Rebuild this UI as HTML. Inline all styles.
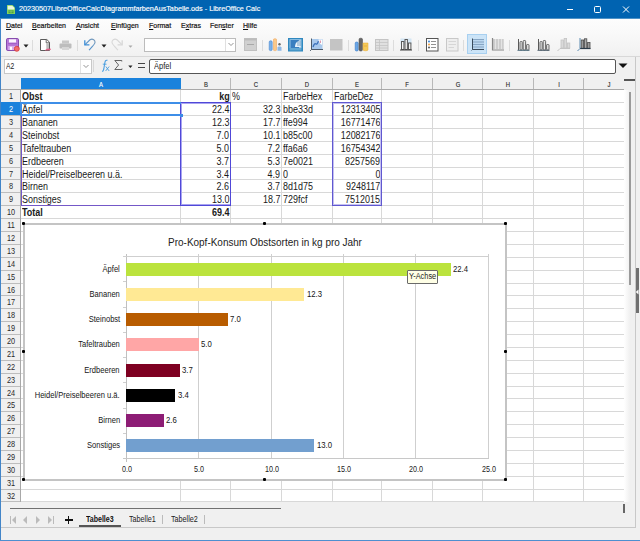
<!DOCTYPE html>
<html><head><meta charset="utf-8"><style>
html,body{margin:0;padding:0;}
body{width:640px;height:541px;position:relative;overflow:hidden;background:#f0f0f0;font-family:"Liberation Sans", sans-serif;}
body>div{position:absolute;}
.t{white-space:nowrap;line-height:1.15;}
u{text-decoration-thickness:0.7px;text-underline-offset:0.6px;}
</style></head><body>
<div style="left:0px;top:0px;width:640px;height:18px;background:#0063b1"></div><svg style="position:absolute;left:7px;top:5px" width="8" height="9" viewBox="0 0 8 9"><path d="M0 0H5.5L8 2.5V9H0Z" fill="#86d45c"/><path d="M0.7 0.7H5.2L7.3 2.8V4.5H0.7Z" fill="#eaf8e0"/><path d="M1.5 5.5H6.5V8.2H1.5Z" fill="#3e9c34"/><path d="M1.5 6.8H6.5M4 5.5V8.2" stroke="#9ed880" stroke-width="0.6"/></svg><div class="t" style="left:19px;top:5.3px;font-size:7.4px;color:#fff;font-weight:400;transform:scaleX(0.975);transform-origin:left top;-webkit-text-stroke:0.15px #fff;">20230507LibreOfficeCalcDiagrammfarbenAusTabelle.ods - LibreOffice Calc</div><svg style="position:absolute;left:560px;top:0px" width="80" height="18" viewBox="0 0 80 18"><path d="M7 9.5H13" stroke="#fff" stroke-width="1"/><rect x="34.5" y="6.5" width="6" height="6" rx="1" fill="none" stroke="#fff" stroke-width="1"/><path d="M63 6.5L69 12.5M69 6.5L63 12.5" stroke="#fff" stroke-width="1"/></svg><div style="left:0px;top:18px;width:640px;height:38px;background:linear-gradient(#fdfdfd,#f9f9f9 40%,#f1f1f1)"></div><div style="left:0px;top:18px;width:640px;height:1px;background:#4d92c8"></div><div class="t" style="left:5.7px;top:21.9px;font-size:7.8px;color:#111;font-weight:400;transform:scaleX(0.9);transform-origin:left top;-webkit-text-stroke:0.2px #111;"><u>D</u>atei</div><div class="t" style="left:32.1px;top:21.9px;font-size:7.8px;color:#111;font-weight:400;transform:scaleX(0.9);transform-origin:left top;-webkit-text-stroke:0.2px #111;"><u>B</u>earbeiten</div><div class="t" style="left:76.2px;top:21.9px;font-size:7.8px;color:#111;font-weight:400;transform:scaleX(0.9);transform-origin:left top;-webkit-text-stroke:0.2px #111;"><u>A</u>nsicht</div><div class="t" style="left:110.6px;top:21.9px;font-size:7.8px;color:#111;font-weight:400;transform:scaleX(0.9);transform-origin:left top;-webkit-text-stroke:0.2px #111;"><u>E</u>infügen</div><div class="t" style="left:149.1px;top:21.9px;font-size:7.8px;color:#111;font-weight:400;transform:scaleX(0.9);transform-origin:left top;-webkit-text-stroke:0.2px #111;"><u>F</u>ormat</div><div class="t" style="left:181px;top:21.9px;font-size:7.8px;color:#111;font-weight:400;transform:scaleX(0.9);transform-origin:left top;-webkit-text-stroke:0.2px #111;">E<u>x</u>tras</div><div class="t" style="left:210.2px;top:21.9px;font-size:7.8px;color:#111;font-weight:400;transform:scaleX(0.9);transform-origin:left top;-webkit-text-stroke:0.2px #111;">Fen<u>s</u>ter</div><div class="t" style="left:243.4px;top:21.9px;font-size:7.8px;color:#111;font-weight:400;transform:scaleX(0.9);transform-origin:left top;-webkit-text-stroke:0.2px #111;"><u>H</u>ilfe</div><div style="left:1px;top:56px;width:639px;height:1px;background:#d8d8d8"></div><div style="left:32px;top:40px;width:1px;height:11px;background:#dcdcdc"></div><div style="left:77px;top:40px;width:1px;height:11px;background:#dcdcdc"></div><div style="left:262px;top:40px;width:1px;height:11px;background:#dcdcdc"></div><div style="left:348px;top:40px;width:1px;height:11px;background:#dcdcdc"></div><div style="left:393px;top:40px;width:1px;height:11px;background:#dcdcdc"></div><div style="left:418px;top:40px;width:1px;height:11px;background:#dcdcdc"></div><div style="left:463px;top:40px;width:1px;height:11px;background:#dcdcdc"></div><div style="left:509px;top:40px;width:1px;height:11px;background:#dcdcdc"></div><svg style="position:absolute;left:6px;top:38px" width="14" height="14" viewBox="0 0 14 14"><rect x="0.5" y="0.5" width="12" height="12" rx="1.2" fill="#b878d8" stroke="#7d3fa6" stroke-width="0.9"/><rect x="3" y="1.3" width="7" height="3.2" fill="#fbf4fe"/><rect x="2" y="5.3" width="9" height="0.8" fill="#9a58c0"/><rect x="2.2" y="8" width="8.6" height="4" fill="#d9acee"/><rect x="4" y="8.8" width="2" height="3" fill="#fff"/><circle cx="10.8" cy="10.8" r="2.5" fill="#f26b6b" stroke="#d83a3a" stroke-width="0.8"/></svg><svg style="position:absolute;left:23px;top:44px" width="6" height="4" viewBox="0 0 6 4"><path d="M0.5 0.5H5.5L3 3.5Z" fill="#222"/></svg><svg style="position:absolute;left:39px;top:38px" width="13" height="14" viewBox="0 0 13 14"><path d="M1.5 1.5H7.8L10.5 4.2V12.5H1.5Z" fill="#fff" stroke="#5a5a5a" stroke-width="1"/><path d="M7.2 2V4.8H10" fill="none" stroke="#5a5a5a" stroke-width="0.9"/><rect x="7.3" y="5.2" width="2.7" height="6.8" fill="#bdbdbd"/><path d="M6.5 12.2C7.5 11 9.5 10.6 11.8 11.2C10.5 12 9 12.3 7.5 12Z" fill="#e8608a" stroke="#e8608a" stroke-width="0.7"/></svg><svg style="position:absolute;left:59px;top:40px" width="14" height="11" viewBox="0 0 14 11"><rect x="3" y="0.5" width="7" height="3" fill="#c8c8c8"/><rect x="0.5" y="3.5" width="12" height="5" rx="1" fill="#bdbdbd"/><rect x="3" y="7" width="7" height="3" fill="#d6d6d6"/></svg><svg style="position:absolute;left:83px;top:38px" width="14" height="14" viewBox="0 0 14 14"><defs><linearGradient id="ug" x1="0" y1="1" x2="1" y2="0"><stop offset="0" stop-color="#3f8fd8"/><stop offset="1" stop-color="#7a9ab8"/></linearGradient></defs><path d="M1.8 6.8L7 1.8C9.5 0.2 12.8 2 11.8 5.2C11.3 6.8 8 10 6 12.2" fill="none" stroke="url(#ug)" stroke-width="1.1"/><path d="M1.8 2.2V6.8H6.4" fill="none" stroke="#3f8fd8" stroke-width="1.3"/></svg><svg style="position:absolute;left:101px;top:44px" width="6" height="4" viewBox="0 0 6 4"><path d="M0.5 0.5H5.5L3 3.5Z" fill="#222"/></svg><svg style="position:absolute;left:110px;top:38px" width="14" height="14" viewBox="0 0 14 14"><path d="M12.2 6.8L7 1.8C4.5 0.2 1.2 2 2.2 5.2C2.7 6.8 6 10 8 12.2" fill="none" stroke="#d8d8d8" stroke-width="1.1"/><path d="M12.2 2.2V6.8H7.6" fill="none" stroke="#d8d8d8" stroke-width="1.3"/></svg><svg style="position:absolute;left:128px;top:45px" width="5" height="3" viewBox="0 0 5 3"><path d="M0.5 0.5H4.5L2.5 2.8Z" fill="#aaa"/></svg><div style="left:144px;top:38px;width:92px;height:14px;background:#fff;border:1px solid #bcbcbc;box-sizing:border-box"></div><div style="left:225px;top:39px;width:1px;height:12px;background:#e0e0e0"></div><svg style="position:absolute;left:227px;top:40px" width="8" height="9" viewBox="0 0 8 9"><path d="M1.5 3L4 5.5L6.5 3" fill="none" stroke="#888" stroke-width="0.9"/></svg><svg style="position:absolute;left:244px;top:38px" width="13" height="13" viewBox="0 0 13 13"><rect x="0.5" y="0.5" width="12" height="12" fill="#d0d0d0" stroke="#c0c0c0"/><rect x="0.5" y="0.5" width="12" height="2" fill="#bcbcbc"/><rect x="3" y="6" width="7" height="1" fill="#a8a8a8"/></svg><svg style="position:absolute;left:268px;top:37px" width="16" height="15" viewBox="0 0 16 15"><rect x="1.2" y="3.8" width="3" height="9.8" rx="1.3" fill="#78b0ea" stroke="#4a88d0" stroke-width="0.6"/><rect x="5.5" y="1.8" width="3" height="11.8" rx="0.8" fill="#f9c98a" stroke="#f0a860" stroke-width="0.6"/><circle cx="11.5" cy="7.3" r="1.2" fill="#666"/><path d="M9.5 13.8V10.5C9.5 9 13.5 9 13.5 10.5V13.8Z" fill="#8cb8e6"/></svg><svg style="position:absolute;left:288px;top:38px" width="16" height="14" viewBox="0 0 16 14"><rect x="0" y="0" width="15" height="13.5" fill="#2f88bf"/><rect x="1.5" y="1.2" width="12" height="9.3" fill="#9cc8e8"/><rect x="2.5" y="2" width="8.5" height="8" fill="#3a7fc0"/><path d="M7 9C7 5 9 3 12.5 2.2V9Z" fill="#e8f2fa"/><path d="M10 2.5V8M12 2.5V8" stroke="#2f6ea8" stroke-width="0.6"/><path d="M1.5 11.8H13.5" stroke="#8cc0e0" stroke-width="0.8"/></svg><svg style="position:absolute;left:310px;top:38px" width="14" height="14" viewBox="0 0 14 14"><rect x="2" y="1" width="10.5" height="10" fill="#a9c9ec"/><path d="M3 9C4 6 5 5 6 6S8 4 8.5 3" fill="none" stroke="#3a6fb8" stroke-width="1.3"/><path d="M8.5 1.5H12V6.5C11 7 10.5 6 10 5.5L9 4Z" fill="#fff"/><path d="M10.3 2.5V5" stroke="#c04a6a" stroke-width="0.7"/><path d="M1.5 0.5V11.5H13" fill="none" stroke="#3a4a5a" stroke-width="0.9"/><path d="M1.5 11.5L0 13" stroke="#3a4a5a" stroke-width="0.8"/></svg><svg style="position:absolute;left:330px;top:39px" width="13" height="12" viewBox="0 0 13 12"><rect x="0" y="0" width="12.5" height="11.5" fill="#c4c4c4"/></svg><svg style="position:absolute;left:354px;top:37px" width="15" height="15" viewBox="0 0 15 15"><rect x="1.2" y="5" width="3" height="9" rx="1.3" fill="#6aa6e6" stroke="#3a7cc8" stroke-width="0.6"/><rect x="5" y="1.2" width="3.5" height="12.8" rx="1.4" fill="#666" stroke="#444" stroke-width="0.5"/><path d="M9 6H14V13C14 14 9 14 9 13Z" fill="#f6cb5a" stroke="#e8a830" stroke-width="0.5"/><path d="M10 9H13" stroke="#e0a030" stroke-width="0.6"/></svg><svg style="position:absolute;left:375px;top:39px" width="14" height="12" viewBox="0 0 14 12"><rect x="0.5" y="0.5" width="12.5" height="11" fill="#e0e0e0" stroke="#c4c4c4"/><path d="M0.5 3.5H13M0.5 6.5H13M0.5 9H13M4.5 0.5V11.5" stroke="#c4c4c4" stroke-width="0.8"/></svg><svg style="position:absolute;left:400px;top:38px" width="13" height="13" viewBox="0 0 13 13"><rect x="0.5" y="0.5" width="11" height="6" fill="#d4e6f4"/><rect x="1.5" y="3.5" width="2.4" height="8" fill="#f4f4f4" stroke="#5a5a5a" stroke-width="1"/><rect x="5" y="1.5" width="2.4" height="10" fill="#f4f4f4" stroke="#5a5a5a" stroke-width="1"/><rect x="8.5" y="5" width="2.4" height="6.5" fill="#f4f4f4" stroke="#5a5a5a" stroke-width="1"/><path d="M0 12H12" stroke="#444" stroke-width="1"/></svg><svg style="position:absolute;left:426px;top:38px" width="13" height="14" viewBox="0 0 13 14"><rect x="0.5" y="0.5" width="11.5" height="12.5" fill="#fff" stroke="#555" stroke-width="1"/><circle cx="3" cy="3.5" r="1" fill="#3a86d8"/><circle cx="3" cy="6.5" r="1" fill="#f0a040"/><circle cx="3" cy="9.5" r="1" fill="#555"/><path d="M5 3.5H10M5 6.5H10M5 9.5H10" stroke="#777" stroke-width="0.8"/></svg><svg style="position:absolute;left:446px;top:38px" width="13" height="14" viewBox="0 0 13 14"><rect x="0.5" y="0.5" width="11.5" height="12.5" fill="#eee" stroke="#c8c8c8" stroke-width="1"/><path d="M2.5 3.5H10M2.5 6.5H10M2.5 9.5H8" stroke="#cfcfcf" stroke-width="0.8"/></svg><div style="left:467px;top:34px;width:20px;height:20px;background:#cce4f7;border:1px solid #a8d0f0;box-sizing:border-box"></div><svg style="position:absolute;left:471px;top:38px" width="14" height="13" viewBox="0 0 14 13"><rect x="1.5" y="1" width="11.5" height="10" fill="#bcd8f0"/><path d="M2 1.5H13M2 4H13M2 6.5H13M2 9H13" stroke="#7090b0" stroke-width="0.7"/><path d="M1.5 0.5V11.5H13" fill="none" stroke="#2a3a4a" stroke-width="0.9"/><path d="M1.5 11.5L0.5 12.5" stroke="#2a3a4a" stroke-width="0.7"/></svg><svg style="position:absolute;left:491px;top:38px" width="13" height="13" viewBox="0 0 13 13"><rect x="1" y="1" width="11" height="10" fill="#e4e4e4"/><path d="M3 1V11M6 1V11M9 1V11M12 1V11" stroke="#aaa" stroke-width="0.8"/><path d="M1.5 0V12H13" fill="none" stroke="#888" stroke-width="1.2"/></svg><svg style="position:absolute;left:517px;top:38px" width="14" height="14" viewBox="0 0 14 14"><path d="M1.5 1V12" stroke="#5a5a5a" stroke-width="1"/><rect x="3" y="3.5" width="2.2" height="8.5" rx="0.8" fill="#e8e8e8" stroke="#5a5a5a" stroke-width="0.9"/><rect x="6.2" y="2.5" width="2.4" height="9.5" rx="0.8" fill="#e8e8e8" stroke="#5a5a5a" stroke-width="0.9"/><rect x="9.6" y="6.5" width="2.4" height="5.5" rx="0.6" fill="#e8e8e8" stroke="#5a5a5a" stroke-width="0.9"/><path d="M0.5 12.3H12.5" stroke="#4a6878" stroke-width="1"/></svg><svg style="position:absolute;left:537px;top:38px" width="14" height="14" viewBox="0 0 14 14"><path d="M1.5 1V12" stroke="#5a5a5a" stroke-width="1"/><rect x="3" y="3.5" width="2.2" height="8.5" rx="0.8" fill="#e8e8e8" stroke="#5a5a5a" stroke-width="0.9"/><rect x="6.2" y="2.5" width="2.4" height="9.5" rx="0.8" fill="#e8e8e8" stroke="#5a5a5a" stroke-width="0.9"/><rect x="9.6" y="6.5" width="2.4" height="5.5" rx="0.6" fill="#e8e8e8" stroke="#5a5a5a" stroke-width="0.9"/><path d="M0.5 12.3H12.5" stroke="#4a5a68" stroke-width="1"/></svg><svg style="position:absolute;left:557px;top:37px" width="14" height="15" viewBox="0 0 14 15"><rect x="4" y="3" width="2.4" height="8" fill="#dadada" stroke="#c4c4c4" stroke-width="0.8"/><rect x="7.2" y="1.5" width="2.4" height="9.5" fill="#dadada" stroke="#c4c4c4" stroke-width="0.8"/><rect x="10.4" y="6" width="2.4" height="5" fill="#dadada" stroke="#c4c4c4" stroke-width="0.8"/><path d="M3 11.5H13M3 11.5L0.5 14" stroke="#c4c4c4" stroke-width="1"/></svg><svg style="position:absolute;left:577px;top:37px" width="14" height="15" viewBox="0 0 14 15"><path d="M3 1V11.5" stroke="#5a8ab0" stroke-width="1"/><rect x="4.2" y="3" width="2.4" height="8.5" fill="#9a9a9a" stroke="#4a4a4a" stroke-width="0.8"/><rect x="7.4" y="1.8" width="2.4" height="9.7" fill="#aaa" stroke="#4a4a4a" stroke-width="0.8"/><rect x="10.6" y="5.5" width="2.4" height="6" fill="#9a9a9a" stroke="#4a4a4a" stroke-width="0.8"/><path d="M3 11.5H13.5" stroke="#2a3a48" stroke-width="1.2"/><path d="M3 11.5L0.5 14" stroke="#5a8ab0" stroke-width="1"/></svg><div style="left:1px;top:57px;width:634px;height:20px;background:#f0f0f0"></div><div style="left:3.5px;top:59px;width:88px;height:15px;background:#fff;border:1px solid #c8c8c8;box-sizing:border-box"></div><div style="left:80px;top:60px;width:1px;height:13px;background:#e2e2e2"></div><svg style="position:absolute;left:81px;top:60px" width="10" height="13" viewBox="0 0 10 13"><path d="M2.5 5L5 7.5L7.5 5" fill="none" stroke="#888" stroke-width="0.9"/></svg><div class="t" style="left:5.5px;top:61.8px;font-size:8.4px;color:#222;font-weight:400;transform:scaleX(0.8);transform-origin:left top;">A2</div><div style="left:93px;top:60px;width:1px;height:12px;background:#d8d8d8"></div><svg style="position:absolute;left:99px;top:59px" width="12" height="14" viewBox="0 0 12 14"><path d="M3.2 12.5C4.8 12.2 4.8 10 5.2 7.5L6 3C6.3 1.5 7.2 1 8.5 1.3" fill="none" stroke="#4a9ee0" stroke-width="1.1"/><path d="M3.8 5.2H7.5" stroke="#4a9ee0" stroke-width="0.9"/><path d="M6.8 7.5L10.2 12M10.2 7.5L6.6 12" stroke="#4a9ee0" stroke-width="0.9"/></svg><svg style="position:absolute;left:113px;top:59px" width="11" height="12" viewBox="0 0 11 12"><path d="M8.8 2.5V1.5H1.8L5.6 6L1.8 10.5H9V9.5" fill="none" stroke="#555" stroke-width="0.9"/></svg><svg style="position:absolute;left:128px;top:65px" width="5" height="4" viewBox="0 0 5 4"><path d="M0.3 0.5H4.5L2.4 3Z" fill="#222"/></svg><div style="left:138px;top:62.6px;width:7px;height:1.2px;background:#444"></div><div style="left:138px;top:66.8px;width:7px;height:1.2px;background:#444"></div><div style="left:149px;top:58.6px;width:467px;height:15px;background:#fff;border:1px solid #555;border-radius:2px;box-sizing:border-box"></div><div class="t" style="left:153.5px;top:62px;font-size:8.2px;color:#222;font-weight:400;transform:scaleX(0.92);transform-origin:left top;">Äpfel</div><svg style="position:absolute;left:618px;top:63px" width="10" height="6" viewBox="0 0 10 6"><path d="M0.5 0.5H9.5L5 5Z" fill="#111"/></svg><div style="left:635px;top:57px;width:1px;height:471px;background:#c8c8c8"></div><div style="left:636px;top:57px;width:4px;height:471px;background:#f0f0f0"></div><div style="left:1px;top:77px;width:634px;height:13px;background:#f0f0f0"></div><div style="left:21px;top:90px;width:603px;height:412px;background:#fff"></div><div style="left:1px;top:90px;width:19px;height:412px;background:#f0f0f0"></div><div style="left:180px;top:78px;width:1px;height:11px;background:#b8b8b8"></div><div style="left:230px;top:78px;width:1px;height:11px;background:#b8b8b8"></div><div style="left:281px;top:78px;width:1px;height:11px;background:#b8b8b8"></div><div style="left:332px;top:78px;width:1px;height:11px;background:#b8b8b8"></div><div style="left:381px;top:78px;width:1px;height:11px;background:#b8b8b8"></div><div style="left:432px;top:78px;width:1px;height:11px;background:#b8b8b8"></div><div style="left:482px;top:78px;width:1px;height:11px;background:#b8b8b8"></div><div style="left:533px;top:78px;width:1px;height:11px;background:#b8b8b8"></div><div style="left:583px;top:78px;width:1px;height:11px;background:#b8b8b8"></div><div style="left:1px;top:89px;width:623px;height:1px;background:#a8a8a8"></div><div style="left:20px;top:90px;width:1px;height:412px;background:#a8a8a8"></div><div style="left:21px;top:78px;width:159.5px;height:11px;background:#1a82dc"></div><div class="t" style="left:100.5px;top:80.6px;font-size:7.6px;color:#fff;font-weight:400;transform:scaleX(0.78) translateX(-50%);transform-origin:left top;-webkit-text-stroke:0.15px #fff;">A</div><div class="t" style="left:205.5px;top:80.6px;font-size:7.6px;color:#2a2a2a;font-weight:400;transform:scaleX(0.78) translateX(-50%);transform-origin:left top;-webkit-text-stroke:0.15px #2a2a2a;">B</div><div class="t" style="left:256.0px;top:80.6px;font-size:7.6px;color:#2a2a2a;font-weight:400;transform:scaleX(0.78) translateX(-50%);transform-origin:left top;-webkit-text-stroke:0.15px #2a2a2a;">C</div><div class="t" style="left:307.0px;top:80.6px;font-size:7.6px;color:#2a2a2a;font-weight:400;transform:scaleX(0.78) translateX(-50%);transform-origin:left top;-webkit-text-stroke:0.15px #2a2a2a;">D</div><div class="t" style="left:357.0px;top:80.6px;font-size:7.6px;color:#2a2a2a;font-weight:400;transform:scaleX(0.78) translateX(-50%);transform-origin:left top;-webkit-text-stroke:0.15px #2a2a2a;">E</div><div class="t" style="left:407.0px;top:80.6px;font-size:7.6px;color:#2a2a2a;font-weight:400;transform:scaleX(0.78) translateX(-50%);transform-origin:left top;-webkit-text-stroke:0.15px #2a2a2a;">F</div><div class="t" style="left:457.5px;top:80.6px;font-size:7.6px;color:#2a2a2a;font-weight:400;transform:scaleX(0.78) translateX(-50%);transform-origin:left top;-webkit-text-stroke:0.15px #2a2a2a;">G</div><div class="t" style="left:508.0px;top:80.6px;font-size:7.6px;color:#2a2a2a;font-weight:400;transform:scaleX(0.78) translateX(-50%);transform-origin:left top;-webkit-text-stroke:0.15px #2a2a2a;">H</div><div class="t" style="left:558.5px;top:80.6px;font-size:7.6px;color:#2a2a2a;font-weight:400;transform:scaleX(0.78) translateX(-50%);transform-origin:left top;-webkit-text-stroke:0.15px #2a2a2a;">I</div><div class="t" style="left:609.0px;top:80.6px;font-size:7.6px;color:#2a2a2a;font-weight:400;transform:scaleX(0.78) translateX(-50%);transform-origin:left top;-webkit-text-stroke:0.15px #2a2a2a;">J</div><div style="left:21px;top:102px;width:603px;height:1px;background:#d8d8d8"></div><div style="left:21px;top:115px;width:603px;height:1px;background:#d8d8d8"></div><div style="left:21px;top:128px;width:603px;height:1px;background:#d8d8d8"></div><div style="left:21px;top:141px;width:603px;height:1px;background:#d8d8d8"></div><div style="left:21px;top:154px;width:603px;height:1px;background:#d8d8d8"></div><div style="left:21px;top:167px;width:603px;height:1px;background:#d8d8d8"></div><div style="left:21px;top:179px;width:603px;height:1px;background:#d8d8d8"></div><div style="left:21px;top:192px;width:603px;height:1px;background:#d8d8d8"></div><div style="left:21px;top:205px;width:603px;height:1px;background:#d8d8d8"></div><div style="left:21px;top:218px;width:603px;height:1px;background:#d8d8d8"></div><div style="left:21px;top:231px;width:603px;height:1px;background:#d8d8d8"></div><div style="left:21px;top:244px;width:603px;height:1px;background:#d8d8d8"></div><div style="left:21px;top:257px;width:603px;height:1px;background:#d8d8d8"></div><div style="left:21px;top:270px;width:603px;height:1px;background:#d8d8d8"></div><div style="left:21px;top:283px;width:603px;height:1px;background:#d8d8d8"></div><div style="left:21px;top:295px;width:603px;height:1px;background:#d8d8d8"></div><div style="left:21px;top:308px;width:603px;height:1px;background:#d8d8d8"></div><div style="left:21px;top:321px;width:603px;height:1px;background:#d8d8d8"></div><div style="left:21px;top:334px;width:603px;height:1px;background:#d8d8d8"></div><div style="left:21px;top:347px;width:603px;height:1px;background:#d8d8d8"></div><div style="left:21px;top:360px;width:603px;height:1px;background:#d8d8d8"></div><div style="left:21px;top:373px;width:603px;height:1px;background:#d8d8d8"></div><div style="left:21px;top:386px;width:603px;height:1px;background:#d8d8d8"></div><div style="left:21px;top:398px;width:603px;height:1px;background:#d8d8d8"></div><div style="left:21px;top:411px;width:603px;height:1px;background:#d8d8d8"></div><div style="left:21px;top:424px;width:603px;height:1px;background:#d8d8d8"></div><div style="left:21px;top:437px;width:603px;height:1px;background:#d8d8d8"></div><div style="left:21px;top:450px;width:603px;height:1px;background:#d8d8d8"></div><div style="left:21px;top:463px;width:603px;height:1px;background:#d8d8d8"></div><div style="left:21px;top:476px;width:603px;height:1px;background:#d8d8d8"></div><div style="left:21px;top:489px;width:603px;height:1px;background:#d8d8d8"></div><div style="left:21px;top:501px;width:603px;height:1px;background:#d8d8d8"></div><div style="left:180px;top:90px;width:1px;height:412px;background:#d8d8d8"></div><div style="left:230px;top:90px;width:1px;height:412px;background:#d8d8d8"></div><div style="left:281px;top:90px;width:1px;height:412px;background:#d8d8d8"></div><div style="left:332px;top:90px;width:1px;height:412px;background:#d8d8d8"></div><div style="left:381px;top:90px;width:1px;height:412px;background:#d8d8d8"></div><div style="left:432px;top:90px;width:1px;height:412px;background:#d8d8d8"></div><div style="left:482px;top:90px;width:1px;height:412px;background:#d8d8d8"></div><div style="left:533px;top:90px;width:1px;height:412px;background:#d8d8d8"></div><div style="left:583px;top:90px;width:1px;height:412px;background:#d8d8d8"></div><div style="left:1px;top:102px;width:19px;height:1px;background:#bdbdbd"></div><div class="t" style="left:11px;top:91.9px;font-size:8.5px;color:#2a2a2a;font-weight:400;transform:scaleX(0.86) translateX(-50%);transform-origin:left top;">1</div><div style="left:1px;top:102px;width:19px;height:14px;background:#1a82dc"></div><div style="left:1px;top:115px;width:19px;height:1px;background:#bdbdbd"></div><div class="t" style="left:11px;top:104.9px;font-size:8.5px;color:#fff;font-weight:400;transform:scaleX(0.86) translateX(-50%);transform-origin:left top;">2</div><div style="left:1px;top:128px;width:19px;height:1px;background:#bdbdbd"></div><div class="t" style="left:11px;top:117.9px;font-size:8.5px;color:#2a2a2a;font-weight:400;transform:scaleX(0.86) translateX(-50%);transform-origin:left top;">3</div><div style="left:1px;top:141px;width:19px;height:1px;background:#bdbdbd"></div><div class="t" style="left:11px;top:130.9px;font-size:8.5px;color:#2a2a2a;font-weight:400;transform:scaleX(0.86) translateX(-50%);transform-origin:left top;">4</div><div style="left:1px;top:154px;width:19px;height:1px;background:#bdbdbd"></div><div class="t" style="left:11px;top:143.9px;font-size:8.5px;color:#2a2a2a;font-weight:400;transform:scaleX(0.86) translateX(-50%);transform-origin:left top;">5</div><div style="left:1px;top:167px;width:19px;height:1px;background:#bdbdbd"></div><div class="t" style="left:11px;top:156.9px;font-size:8.5px;color:#2a2a2a;font-weight:400;transform:scaleX(0.86) translateX(-50%);transform-origin:left top;">6</div><div style="left:1px;top:179px;width:19px;height:1px;background:#bdbdbd"></div><div class="t" style="left:11px;top:169.9px;font-size:8.5px;color:#2a2a2a;font-weight:400;transform:scaleX(0.86) translateX(-50%);transform-origin:left top;">7</div><div style="left:1px;top:192px;width:19px;height:1px;background:#bdbdbd"></div><div class="t" style="left:11px;top:181.9px;font-size:8.5px;color:#2a2a2a;font-weight:400;transform:scaleX(0.86) translateX(-50%);transform-origin:left top;">8</div><div style="left:1px;top:205px;width:19px;height:1px;background:#bdbdbd"></div><div class="t" style="left:11px;top:194.9px;font-size:8.5px;color:#2a2a2a;font-weight:400;transform:scaleX(0.86) translateX(-50%);transform-origin:left top;">9</div><div style="left:1px;top:218px;width:19px;height:1px;background:#bdbdbd"></div><div class="t" style="left:11px;top:207.9px;font-size:8.5px;color:#2a2a2a;font-weight:400;transform:scaleX(0.86) translateX(-50%);transform-origin:left top;">10</div><div style="left:1px;top:231px;width:19px;height:1px;background:#bdbdbd"></div><div class="t" style="left:11px;top:220.9px;font-size:8.5px;color:#2a2a2a;font-weight:400;transform:scaleX(0.86) translateX(-50%);transform-origin:left top;">11</div><div style="left:1px;top:244px;width:19px;height:1px;background:#bdbdbd"></div><div class="t" style="left:11px;top:233.9px;font-size:8.5px;color:#2a2a2a;font-weight:400;transform:scaleX(0.86) translateX(-50%);transform-origin:left top;">12</div><div style="left:1px;top:257px;width:19px;height:1px;background:#bdbdbd"></div><div class="t" style="left:11px;top:246.9px;font-size:8.5px;color:#2a2a2a;font-weight:400;transform:scaleX(0.86) translateX(-50%);transform-origin:left top;">13</div><div style="left:1px;top:270px;width:19px;height:1px;background:#bdbdbd"></div><div class="t" style="left:11px;top:259.9px;font-size:8.5px;color:#2a2a2a;font-weight:400;transform:scaleX(0.86) translateX(-50%);transform-origin:left top;">14</div><div style="left:1px;top:283px;width:19px;height:1px;background:#bdbdbd"></div><div class="t" style="left:11px;top:272.9px;font-size:8.5px;color:#2a2a2a;font-weight:400;transform:scaleX(0.86) translateX(-50%);transform-origin:left top;">15</div><div style="left:1px;top:295px;width:19px;height:1px;background:#bdbdbd"></div><div class="t" style="left:11px;top:285.9px;font-size:8.5px;color:#2a2a2a;font-weight:400;transform:scaleX(0.86) translateX(-50%);transform-origin:left top;">16</div><div style="left:1px;top:308px;width:19px;height:1px;background:#bdbdbd"></div><div class="t" style="left:11px;top:297.9px;font-size:8.5px;color:#2a2a2a;font-weight:400;transform:scaleX(0.86) translateX(-50%);transform-origin:left top;">17</div><div style="left:1px;top:321px;width:19px;height:1px;background:#bdbdbd"></div><div class="t" style="left:11px;top:310.9px;font-size:8.5px;color:#2a2a2a;font-weight:400;transform:scaleX(0.86) translateX(-50%);transform-origin:left top;">18</div><div style="left:1px;top:334px;width:19px;height:1px;background:#bdbdbd"></div><div class="t" style="left:11px;top:323.9px;font-size:8.5px;color:#2a2a2a;font-weight:400;transform:scaleX(0.86) translateX(-50%);transform-origin:left top;">19</div><div style="left:1px;top:347px;width:19px;height:1px;background:#bdbdbd"></div><div class="t" style="left:11px;top:336.9px;font-size:8.5px;color:#2a2a2a;font-weight:400;transform:scaleX(0.86) translateX(-50%);transform-origin:left top;">20</div><div style="left:1px;top:360px;width:19px;height:1px;background:#bdbdbd"></div><div class="t" style="left:11px;top:349.9px;font-size:8.5px;color:#2a2a2a;font-weight:400;transform:scaleX(0.86) translateX(-50%);transform-origin:left top;">21</div><div style="left:1px;top:373px;width:19px;height:1px;background:#bdbdbd"></div><div class="t" style="left:11px;top:362.9px;font-size:8.5px;color:#2a2a2a;font-weight:400;transform:scaleX(0.86) translateX(-50%);transform-origin:left top;">22</div><div style="left:1px;top:386px;width:19px;height:1px;background:#bdbdbd"></div><div class="t" style="left:11px;top:375.9px;font-size:8.5px;color:#2a2a2a;font-weight:400;transform:scaleX(0.86) translateX(-50%);transform-origin:left top;">23</div><div style="left:1px;top:398px;width:19px;height:1px;background:#bdbdbd"></div><div class="t" style="left:11px;top:388.9px;font-size:8.5px;color:#2a2a2a;font-weight:400;transform:scaleX(0.86) translateX(-50%);transform-origin:left top;">24</div><div style="left:1px;top:411px;width:19px;height:1px;background:#bdbdbd"></div><div class="t" style="left:11px;top:400.9px;font-size:8.5px;color:#2a2a2a;font-weight:400;transform:scaleX(0.86) translateX(-50%);transform-origin:left top;">25</div><div style="left:1px;top:424px;width:19px;height:1px;background:#bdbdbd"></div><div class="t" style="left:11px;top:413.9px;font-size:8.5px;color:#2a2a2a;font-weight:400;transform:scaleX(0.86) translateX(-50%);transform-origin:left top;">26</div><div style="left:1px;top:437px;width:19px;height:1px;background:#bdbdbd"></div><div class="t" style="left:11px;top:426.9px;font-size:8.5px;color:#2a2a2a;font-weight:400;transform:scaleX(0.86) translateX(-50%);transform-origin:left top;">27</div><div style="left:1px;top:450px;width:19px;height:1px;background:#bdbdbd"></div><div class="t" style="left:11px;top:439.9px;font-size:8.5px;color:#2a2a2a;font-weight:400;transform:scaleX(0.86) translateX(-50%);transform-origin:left top;">28</div><div style="left:1px;top:463px;width:19px;height:1px;background:#bdbdbd"></div><div class="t" style="left:11px;top:452.9px;font-size:8.5px;color:#2a2a2a;font-weight:400;transform:scaleX(0.86) translateX(-50%);transform-origin:left top;">29</div><div style="left:1px;top:476px;width:19px;height:1px;background:#bdbdbd"></div><div class="t" style="left:11px;top:465.9px;font-size:8.5px;color:#2a2a2a;font-weight:400;transform:scaleX(0.86) translateX(-50%);transform-origin:left top;">30</div><div style="left:1px;top:489px;width:19px;height:1px;background:#bdbdbd"></div><div class="t" style="left:11px;top:478.9px;font-size:8.5px;color:#2a2a2a;font-weight:400;transform:scaleX(0.86) translateX(-50%);transform-origin:left top;">31</div><div style="left:1px;top:501px;width:19px;height:1px;background:#bdbdbd"></div><div class="t" style="left:11px;top:491.9px;font-size:8.5px;color:#2a2a2a;font-weight:400;transform:scaleX(0.86) translateX(-50%);transform-origin:left top;">32</div><div class="t" style="left:21.9px;top:90.6px;font-size:10px;color:#1a1a1a;font-weight:700;transform:scaleX(0.9);transform-origin:left top;">Obst</div><div class="t" style="right:410.8px;top:90.6px;font-size:10px;color:#1a1a1a;font-weight:700;transform:scaleX(0.9);transform-origin:right top;">kg</div><div class="t" style="left:231.9px;top:90.6px;font-size:10px;color:#1a1a1a;font-weight:400;transform:scaleX(0.895);transform-origin:left top;">%</div><div class="t" style="left:282.9px;top:90.6px;font-size:10px;color:#1a1a1a;font-weight:400;transform:scaleX(0.895);transform-origin:left top;">FarbeHex</div><div class="t" style="left:333.9px;top:90.6px;font-size:10px;color:#1a1a1a;font-weight:400;transform:scaleX(0.895);transform-origin:left top;">FarbeDez</div><div class="t" style="left:21.9px;top:103.6px;font-size:10px;color:#1a1a1a;font-weight:400;transform:scaleX(0.895);transform-origin:left top;">Äpfel</div><div class="t" style="right:410.8px;top:103.6px;font-size:10px;color:#1a1a1a;font-weight:400;transform:scaleX(0.895);transform-origin:right top;">22.4</div><div class="t" style="right:359.8px;top:103.6px;font-size:10px;color:#1a1a1a;font-weight:400;transform:scaleX(0.895);transform-origin:right top;">32.3</div><div class="t" style="left:282.9px;top:103.6px;font-size:10px;color:#1a1a1a;font-weight:400;transform:scaleX(0.895);transform-origin:left top;">bbe33d</div><div class="t" style="right:259.8px;top:103.6px;font-size:10px;color:#1a1a1a;font-weight:400;transform:scaleX(0.895);transform-origin:right top;">12313405</div><div class="t" style="left:21.9px;top:116.6px;font-size:10px;color:#1a1a1a;font-weight:400;transform:scaleX(0.895);transform-origin:left top;">Bananen</div><div class="t" style="right:410.8px;top:116.6px;font-size:10px;color:#1a1a1a;font-weight:400;transform:scaleX(0.895);transform-origin:right top;">12.3</div><div class="t" style="right:359.8px;top:116.6px;font-size:10px;color:#1a1a1a;font-weight:400;transform:scaleX(0.895);transform-origin:right top;">17.7</div><div class="t" style="left:282.9px;top:116.6px;font-size:10px;color:#1a1a1a;font-weight:400;transform:scaleX(0.895);transform-origin:left top;">ffe994</div><div class="t" style="right:259.8px;top:116.6px;font-size:10px;color:#1a1a1a;font-weight:400;transform:scaleX(0.895);transform-origin:right top;">16771476</div><div class="t" style="left:21.9px;top:129.6px;font-size:10px;color:#1a1a1a;font-weight:400;transform:scaleX(0.895);transform-origin:left top;">Steinobst</div><div class="t" style="right:410.8px;top:129.6px;font-size:10px;color:#1a1a1a;font-weight:400;transform:scaleX(0.895);transform-origin:right top;">7.0</div><div class="t" style="right:359.8px;top:129.6px;font-size:10px;color:#1a1a1a;font-weight:400;transform:scaleX(0.895);transform-origin:right top;">10.1</div><div class="t" style="left:282.9px;top:129.6px;font-size:10px;color:#1a1a1a;font-weight:400;transform:scaleX(0.895);transform-origin:left top;">b85c00</div><div class="t" style="right:259.8px;top:129.6px;font-size:10px;color:#1a1a1a;font-weight:400;transform:scaleX(0.895);transform-origin:right top;">12082176</div><div class="t" style="left:21.9px;top:142.6px;font-size:10px;color:#1a1a1a;font-weight:400;transform:scaleX(0.895);transform-origin:left top;">Tafeltrauben</div><div class="t" style="right:410.8px;top:142.6px;font-size:10px;color:#1a1a1a;font-weight:400;transform:scaleX(0.895);transform-origin:right top;">5.0</div><div class="t" style="right:359.8px;top:142.6px;font-size:10px;color:#1a1a1a;font-weight:400;transform:scaleX(0.895);transform-origin:right top;">7.2</div><div class="t" style="left:282.9px;top:142.6px;font-size:10px;color:#1a1a1a;font-weight:400;transform:scaleX(0.895);transform-origin:left top;">ffa6a6</div><div class="t" style="right:259.8px;top:142.6px;font-size:10px;color:#1a1a1a;font-weight:400;transform:scaleX(0.895);transform-origin:right top;">16754342</div><div class="t" style="left:21.9px;top:155.6px;font-size:10px;color:#1a1a1a;font-weight:400;transform:scaleX(0.895);transform-origin:left top;">Erdbeeren</div><div class="t" style="right:410.8px;top:155.6px;font-size:10px;color:#1a1a1a;font-weight:400;transform:scaleX(0.895);transform-origin:right top;">3.7</div><div class="t" style="right:359.8px;top:155.6px;font-size:10px;color:#1a1a1a;font-weight:400;transform:scaleX(0.895);transform-origin:right top;">5.3</div><div class="t" style="left:282.9px;top:155.6px;font-size:10px;color:#1a1a1a;font-weight:400;transform:scaleX(0.895);transform-origin:left top;">7e0021</div><div class="t" style="right:259.8px;top:155.6px;font-size:10px;color:#1a1a1a;font-weight:400;transform:scaleX(0.895);transform-origin:right top;">8257569</div><div class="t" style="left:21.9px;top:168.6px;font-size:10px;color:#1a1a1a;font-weight:400;transform:scaleX(0.895);transform-origin:left top;">Heidel/Preiselbeeren u.ä.</div><div class="t" style="right:410.8px;top:168.6px;font-size:10px;color:#1a1a1a;font-weight:400;transform:scaleX(0.895);transform-origin:right top;">3.4</div><div class="t" style="right:359.8px;top:168.6px;font-size:10px;color:#1a1a1a;font-weight:400;transform:scaleX(0.895);transform-origin:right top;">4.9</div><div class="t" style="left:282.9px;top:168.6px;font-size:10px;color:#1a1a1a;font-weight:400;transform:scaleX(0.895);transform-origin:left top;">0</div><div class="t" style="right:259.8px;top:168.6px;font-size:10px;color:#1a1a1a;font-weight:400;transform:scaleX(0.895);transform-origin:right top;">0</div><div class="t" style="left:21.9px;top:180.6px;font-size:10px;color:#1a1a1a;font-weight:400;transform:scaleX(0.895);transform-origin:left top;">Birnen</div><div class="t" style="right:410.8px;top:180.6px;font-size:10px;color:#1a1a1a;font-weight:400;transform:scaleX(0.895);transform-origin:right top;">2.6</div><div class="t" style="right:359.8px;top:180.6px;font-size:10px;color:#1a1a1a;font-weight:400;transform:scaleX(0.895);transform-origin:right top;">3.7</div><div class="t" style="left:282.9px;top:180.6px;font-size:10px;color:#1a1a1a;font-weight:400;transform:scaleX(0.895);transform-origin:left top;">8d1d75</div><div class="t" style="right:259.8px;top:180.6px;font-size:10px;color:#1a1a1a;font-weight:400;transform:scaleX(0.895);transform-origin:right top;">9248117</div><div class="t" style="left:21.9px;top:193.6px;font-size:10px;color:#1a1a1a;font-weight:400;transform:scaleX(0.895);transform-origin:left top;">Sonstiges</div><div class="t" style="right:410.8px;top:193.6px;font-size:10px;color:#1a1a1a;font-weight:400;transform:scaleX(0.895);transform-origin:right top;">13.0</div><div class="t" style="right:359.8px;top:193.6px;font-size:10px;color:#1a1a1a;font-weight:400;transform:scaleX(0.895);transform-origin:right top;">18.7</div><div class="t" style="left:282.9px;top:193.6px;font-size:10px;color:#1a1a1a;font-weight:400;transform:scaleX(0.895);transform-origin:left top;">729fcf</div><div class="t" style="right:259.8px;top:193.6px;font-size:10px;color:#1a1a1a;font-weight:400;transform:scaleX(0.895);transform-origin:right top;">7512015</div><div class="t" style="left:21.9px;top:206.6px;font-size:10px;color:#1a1a1a;font-weight:700;transform:scaleX(0.9);transform-origin:left top;">Total</div><div class="t" style="right:410.8px;top:206.6px;font-size:10px;color:#1a1a1a;font-weight:700;transform:scaleX(0.9);transform-origin:right top;">69.4</div><div style="left:21px;top:102px;width:160px;height:104px;border:1px solid #7458c8;border-right:none;box-sizing:border-box"></div><div style="left:180px;top:102px;width:51px;height:104px;border:1px solid #5048d8;box-sizing:border-box"></div><div style="left:181px;top:103px;width:49px;height:102px;border:1px solid #a8a4f0;border-right:none;box-sizing:border-box"></div><div style="left:332px;top:102px;width:50px;height:104px;border:1px solid #6058d0;box-sizing:border-box"></div><div style="left:333px;top:103px;width:48px;height:102px;border:1px solid #c4c0f0;box-sizing:border-box"></div><div style="left:20px;top:102px;width:161px;height:14px;border:2px solid #3d8ee8;border-right:none;box-sizing:border-box"></div><div style="left:179.5px;top:114px;width:3px;height:3px;background:#3b8be6"></div><div style="left:22.75px;top:222.75px;width:484px;height:258px;background:#fff;border:2px solid #c4c4c4;box-sizing:border-box"></div><div style="left:22.299999999999997px;top:222.20000000000002px;width:3.2px;height:3.2px;border-radius:1px;background:#000"></div><div style="left:262.79999999999995px;top:222.20000000000002px;width:3.2px;height:3.2px;border-radius:1px;background:#000"></div><div style="left:504.29999999999995px;top:222.20000000000002px;width:3.2px;height:3.2px;border-radius:1px;background:#000"></div><div style="left:22.299999999999997px;top:349.79999999999995px;width:3.2px;height:3.2px;border-radius:1px;background:#000"></div><div style="left:504.29999999999995px;top:349.79999999999995px;width:3.2px;height:3.2px;border-radius:1px;background:#000"></div><div style="left:22.299999999999997px;top:478.0px;width:3.2px;height:3.2px;border-radius:1px;background:#000"></div><div style="left:262.79999999999995px;top:478.0px;width:3.2px;height:3.2px;border-radius:1px;background:#000"></div><div style="left:504.29999999999995px;top:478.0px;width:3.2px;height:3.2px;border-radius:1px;background:#000"></div><div class="t" style="left:265.35px;top:235.9px;font-size:11px;color:#222;font-weight:400;transform:scaleX(0.906) translateX(-50%);transform-origin:left top;">Pro-Kopf-Konsum Obstsorten in kg pro Jahr</div><div style="left:126px;top:254px;width:1px;height:208px;background:#c0c0c0"></div><div class="t" style="left:126.5px;top:463.8px;font-size:9px;color:#222;font-weight:400;transform:scaleX(0.8) translateX(-50%);transform-origin:left top;">0.0</div><div style="left:198px;top:254px;width:1px;height:205px;background:#cfcfcf"></div><div class="t" style="left:198.5px;top:463.8px;font-size:9px;color:#222;font-weight:400;transform:scaleX(0.8) translateX(-50%);transform-origin:left top;">5.0</div><div style="left:271px;top:254px;width:1px;height:205px;background:#cfcfcf"></div><div class="t" style="left:271.5px;top:463.8px;font-size:9px;color:#222;font-weight:400;transform:scaleX(0.8) translateX(-50%);transform-origin:left top;">10.0</div><div style="left:343px;top:254px;width:1px;height:205px;background:#cfcfcf"></div><div class="t" style="left:343.5px;top:463.8px;font-size:9px;color:#222;font-weight:400;transform:scaleX(0.8) translateX(-50%);transform-origin:left top;">15.0</div><div style="left:415px;top:254px;width:1px;height:205px;background:#cfcfcf"></div><div class="t" style="left:415.5px;top:463.8px;font-size:9px;color:#222;font-weight:400;transform:scaleX(0.8) translateX(-50%);transform-origin:left top;">20.0</div><div style="left:488px;top:254px;width:1px;height:205px;background:#cfcfcf"></div><div class="t" style="left:488.5px;top:463.8px;font-size:9px;color:#222;font-weight:400;transform:scaleX(0.8) translateX(-50%);transform-origin:left top;">25.0</div><div style="left:126px;top:256px;width:363px;height:1px;background:#cfcfcf"></div><div style="left:123px;top:458px;width:366px;height:1px;background:#c8c8c8"></div><div style="left:126px;top:262.625px;width:324.602px;height:13px;background:#bbe33d"></div><div class="t" style="left:453.102px;top:263.625px;font-size:9px;color:#151515;font-weight:400;transform:scaleX(0.86);transform-origin:left top;">22.4</div><div class="t" style="right:520px;top:263.625px;font-size:8.7px;color:#151515;font-weight:400;transform:scaleX(0.87);transform-origin:right top;">Äpfel</div><div style="left:123px;top:256px;width:3px;height:1px;background:#cfcfcf"></div><div style="left:126px;top:287.875px;width:178.354px;height:13px;background:#ffe994"></div><div class="t" style="left:306.85400000000004px;top:288.875px;font-size:9px;color:#151515;font-weight:400;transform:scaleX(0.86);transform-origin:left top;">12.3</div><div class="t" style="right:520px;top:288.875px;font-size:8.7px;color:#151515;font-weight:400;transform:scaleX(0.87);transform-origin:right top;">Bananen</div><div style="left:123px;top:281px;width:3px;height:1px;background:#cfcfcf"></div><div style="left:126px;top:313.125px;width:101.61px;height:13px;background:#b85c00"></div><div class="t" style="left:230.11px;top:314.125px;font-size:9px;color:#151515;font-weight:400;transform:scaleX(0.86);transform-origin:left top;">7.0</div><div class="t" style="right:520px;top:314.125px;font-size:8.7px;color:#151515;font-weight:400;transform:scaleX(0.87);transform-origin:right top;">Steinobst</div><div style="left:123px;top:307px;width:3px;height:1px;background:#cfcfcf"></div><div style="left:126px;top:338.375px;width:72.65px;height:13px;background:#ffa6a6"></div><div class="t" style="left:201.15px;top:339.375px;font-size:9px;color:#151515;font-weight:400;transform:scaleX(0.86);transform-origin:left top;">5.0</div><div class="t" style="right:520px;top:339.375px;font-size:8.7px;color:#151515;font-weight:400;transform:scaleX(0.87);transform-origin:right top;">Tafeltrauben</div><div style="left:123px;top:332px;width:3px;height:1px;background:#cfcfcf"></div><div style="left:126px;top:363.625px;width:53.82600000000001px;height:13px;background:#7e0021"></div><div class="t" style="left:182.32600000000002px;top:364.625px;font-size:9px;color:#151515;font-weight:400;transform:scaleX(0.86);transform-origin:left top;">3.7</div><div class="t" style="right:520px;top:364.625px;font-size:8.7px;color:#151515;font-weight:400;transform:scaleX(0.87);transform-origin:right top;">Erdbeeren</div><div style="left:123px;top:357px;width:3px;height:1px;background:#cfcfcf"></div><div style="left:126px;top:388.875px;width:49.482px;height:13px;background:#000000"></div><div class="t" style="left:177.982px;top:389.875px;font-size:9px;color:#151515;font-weight:400;transform:scaleX(0.86);transform-origin:left top;">3.4</div><div class="t" style="right:520px;top:389.875px;font-size:8.7px;color:#151515;font-weight:400;transform:scaleX(0.87);transform-origin:right top;">Heidel/Preiselbeeren u.ä.</div><div style="left:123px;top:382px;width:3px;height:1px;background:#cfcfcf"></div><div style="left:126px;top:414.125px;width:37.898px;height:13px;background:#8d1d75"></div><div class="t" style="left:166.398px;top:415.125px;font-size:9px;color:#151515;font-weight:400;transform:scaleX(0.86);transform-origin:left top;">2.6</div><div class="t" style="right:520px;top:415.125px;font-size:8.7px;color:#151515;font-weight:400;transform:scaleX(0.87);transform-origin:right top;">Birnen</div><div style="left:123px;top:408px;width:3px;height:1px;background:#cfcfcf"></div><div style="left:126px;top:439.375px;width:188.49px;height:13px;background:#729fcf"></div><div class="t" style="left:316.99px;top:440.375px;font-size:9px;color:#151515;font-weight:400;transform:scaleX(0.86);transform-origin:left top;">13.0</div><div class="t" style="right:520px;top:440.375px;font-size:8.7px;color:#151515;font-weight:400;transform:scaleX(0.87);transform-origin:right top;">Sonstiges</div><div style="left:123px;top:433px;width:3px;height:1px;background:#cfcfcf"></div><div style="left:406.5px;top:270px;width:31.5px;height:13.5px;background:#ffffe6;border:1px solid #6a6a6a;border-radius:1px;box-sizing:border-box"></div><div class="t" style="left:408.8px;top:272.3px;font-size:8.4px;color:#1a1a1a;font-weight:400;transform:scaleX(0.88);transform-origin:left top;">Y-Achse</div><div style="left:1px;top:502px;width:634px;height:26px;background:#f0f0f0"></div><div style="left:10px;top:508px;width:271px;height:1px;background:#707070"></div><div style="left:622.5px;top:504px;width:2px;height:9px;background:#666"></div><div style="left:624px;top:77px;width:11px;height:425px;background:#f0f0f0"></div><div style="left:624px;top:79px;width:11px;height:2px;background:#555"></div><div style="left:624px;top:90px;width:6px;height:412px;background:linear-gradient(90deg,#fff,#f0f0f0)"></div><div style="left:629px;top:92px;width:2px;height:193px;background:#9a9a9a"></div><div style="left:635.5px;top:268px;width:3.5px;height:45px;background:#707070"></div><svg style="position:absolute;left:635px;top:289px" width="5" height="6" viewBox="0 0 5 6"><path d="M3.5 0.5V5.5L0.8 3Z" fill="#fff"/></svg><svg style="position:absolute;left:6px;top:514px" width="50" height="12" viewBox="0 0 50 12"><path d="M4.5 2V10" stroke="#bbb" stroke-width="1"/><path d="M10 2V10L6 6Z" fill="#bbb"/><path d="M21 2V10L17 6Z" fill="#bbb"/><path d="M30 2V10L34 6Z" fill="#bbb"/><path d="M42 2V10L46 6Z" fill="#bbb"/><path d="M47.5 2V10" stroke="#bbb" stroke-width="1"/></svg><div style="left:64.5px;top:519px;width:8px;height:1.8px;background:#111"></div><div style="left:67.6px;top:516px;width:1.8px;height:8px;background:#111"></div><div class="t" style="left:86px;top:515px;font-size:8.2px;color:#111;font-weight:700;transform:scaleX(0.86);transform-origin:left top;">Tabelle3</div><div style="left:79px;top:524.5px;width:42px;height:2px;background:#555"></div><div class="t" style="left:129px;top:515px;font-size:8.2px;color:#222;font-weight:400;transform:scaleX(0.88);transform-origin:left top;">Tabelle1</div><div style="left:162px;top:515px;width:1px;height:9px;background:#bbb"></div><div class="t" style="left:171px;top:515px;font-size:8.2px;color:#222;font-weight:400;transform:scaleX(0.88);transform-origin:left top;">Tabelle2</div><div style="left:204px;top:515px;width:1px;height:9px;background:#bbb"></div><div style="left:1px;top:527px;width:634px;height:1px;background:#c8c8c8"></div><div style="left:1px;top:528px;width:639px;height:12px;background:#f0f0f0"></div><div style="left:0px;top:18px;width:1.2px;height:523px;background:#4285c8"></div><div style="left:0px;top:539.5px;width:640px;height:1.5px;background:#4d8fd0"></div>
</body></html>
